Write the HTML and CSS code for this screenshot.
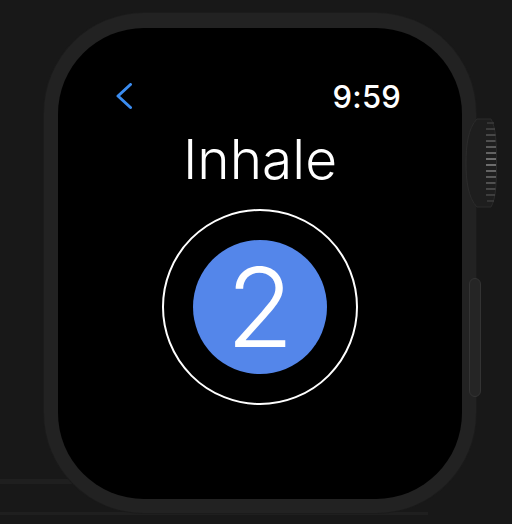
FILE: index.html
```html
<!DOCTYPE html>
<html lang="en">
<head>
<meta charset="utf-8">
<title>Breathe</title>
<link rel="stylesheet" href="styles.css">
</head>
<body>
<div class="stage">
  <div class="watch">
    <div class="screen">
      <div class="status">
        <svg class="back" width="17" height="28" viewBox="0 0 17 28" aria-label="Back">
          <path d="M14.5 1.5 L2 13 L14.5 24.5" fill="none" stroke="#3b8cf0" stroke-width="3" stroke-linecap="round" stroke-linejoin="round"/>
        </svg>
        <span class="time">9:59</span>
      </div>
      <h1 class="title">Inhale</h1>
      <div class="ring">
        <div class="count">2</div>
      </div>
    </div>
    <div class="crown">
      <svg width="32" height="90" viewBox="0 0 32 90">
        <defs>
          <linearGradient id="rg" x1="0" y1="0" x2="0" y2="1">
            <stop offset="0" stop-color="#3a3a3a"/>
            <stop offset="0.5" stop-color="#8c8c8c"/>
            <stop offset="1" stop-color="#3a3a3a"/>
          </linearGradient>
        </defs>
        <path d="M12 1 H26 C31 10 31.5 25 31.5 45 C31.5 65 31 80 26 89 H12 C3 80 1 62 1 45 C1 28 3 10 12 1 Z" fill="#1e1e1e" stroke="#2b2b2b" stroke-width="1"/>
        <g stroke="url(#rg)" stroke-width="1.6">
          <path d="M22 5 H29 M21 11 H30 M21 17 H30.5 M21 23 H30.5 M21 29 H31 M21 35 H31 M21 41 H31 M21 47 H31 M21 53 H31 M21 59 H31 M21 65 H30.5 M21 71 H30.5 M21 77 H30 M22 83 H29"/>
        </g>
      </svg>
    </div>
    <div class="side-button"></div>
  </div>
</div>
</body>
</html>
```

FILE: styles.css
```css
html, body {
  margin: 0;
  padding: 0;
}
body {
  width: 512px;
  height: 524px;
  overflow: hidden;
  background-color: #181818;
  background-image:
    linear-gradient(#1f1f1f, #1f1f1f),
    linear-gradient(#1f1f1f, #1f1f1f);
  background-repeat: no-repeat;
  background-size: 120px 5px, 428px 3px;
  background-position: 0 479px, 0 512px;
  font-family: Inter, "Noto Sans", sans-serif;
  color: #fff;
}
.stage {
  padding: 13px 0 0 44px;
}
.watch {
  position: relative;
  width: 432px;
  height: 500px;
  box-sizing: border-box;
  padding: 15px 14px 14px 14px;
  border-radius: 100px;
  background: #222222;
  box-shadow: 0 0 0 1px #1b1b1b;
}
.screen {
  height: 100%;
  border-radius: 86px;
  background: #000;
  display: flex;
  flex-direction: column;
  align-items: center;
}
.status {
  align-self: stretch;
  display: flex;
  justify-content: space-between;
  align-items: center;
  padding: 55px 61px 0 58px;
  height: 28px;
}
.back {
  display: block;
}
.time {
  font-size: 31px;
  font-weight: 500;
  line-height: 28px;
  letter-spacing: 0.2px;
}
.title {
  margin: 18px 0 0 0;
  font-size: 55px;
  font-weight: 300;
  line-height: 60px;
  letter-spacing: 0;
}
.ring {
  margin-top: 20px;
  width: 192px;
  height: 192px;
  border: 2px solid #ffffff;
  border-radius: 50%;
  display: flex;
  align-items: center;
  justify-content: center;
}
.count {
  width: 134px;
  height: 134px;
  border-radius: 50%;
  background: #5486ea;
  display: flex;
  align-items: center;
  justify-content: center;
  font-size: 110px;
  font-weight: 300;
  line-height: 1;
}
.crown {
  position: absolute;
  left: 421px;
  top: 105px;
  width: 32px;
  height: 90px;
}
.crown svg {
  display: block;
}
.side-button {
  position: absolute;
  left: 425px;
  top: 265px;
  width: 10px;
  height: 117px;
  border-radius: 6px;
  background: #252525;
  border: 1px solid #333;
}
```
